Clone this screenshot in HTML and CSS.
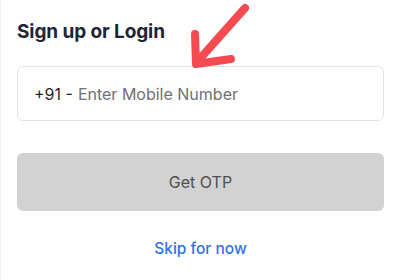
FILE: index.html
```html
<!DOCTYPE html>
<html>
<head>
<meta charset="utf-8">
<link rel="stylesheet" href="styles.css">
</head>
<body>
<div class="card">
  <h1 class="title">Sign up or Login</h1>
  <div class="phone-field">
    <span class="prefix">+91 -</span>
    <span class="placeholder">Enter Mobile Number</span>
  </div>
  <button class="otp-btn">Get OTP</button>
  <div class="skip-row"><a class="skip">Skip for now</a></div>
  <svg class="arrow" width="400" height="80" viewBox="0 0 400 80">
    <path d="M244 8 L196 62 M194 34 L195 64 L230 59" fill="none" stroke="#f54b50" stroke-width="8" stroke-linecap="round" stroke-linejoin="round"/>
  </svg>
</div>
</body>
</html>
```
FILE: styles.css
```css
html, body {
  margin: 0;
  padding: 0;
  background: #ffffff;
}
body {
  width: 400px;
  height: 280px;
  overflow: hidden;
  font-family: "Inter", "Open Sans", sans-serif;
}
.card {
  position: relative;
  box-sizing: border-box;
  width: 400px;
  height: 280px;
  padding: 20px 16px 0 16px;
  border-left: 1px solid #eef2f8;
  border-top-right-radius: 8px;
  display: flex;
  flex-direction: column;
}
.title {
  margin: 0;
  font-size: 19px;
  line-height: 24px;
  font-weight: 700;
  color: #1d2536;
  letter-spacing: -0.1px;
}
.phone-field {
  margin-top: 22px;
  height: 55px;
  box-sizing: border-box;
  border: 1px solid #e3e3e3;
  border-radius: 6px;
  display: flex;
  align-items: center;
  padding-left: 16px;
  font-size: 16px;
  gap: 5px;
}
.prefix {
  color: #2a2a2a;
}
.placeholder {
  color: #717171;
}
.otp-btn {
  margin-top: 32px;
  height: 58px;
  border: none;
  border-radius: 6px;
  background: #d2d2d2;
  color: #505050;
  font-family: inherit;
  font-size: 16px;
  padding: 0;
}
.skip-row {
  margin-top: 28px;
  display: flex;
  justify-content: center;
}
.skip {
  color: #2f74e0;
  font-size: 15.5px;
  font-weight: 500;
}
.arrow {
  position: absolute;
  left: 0;
  top: 0;
}
```
